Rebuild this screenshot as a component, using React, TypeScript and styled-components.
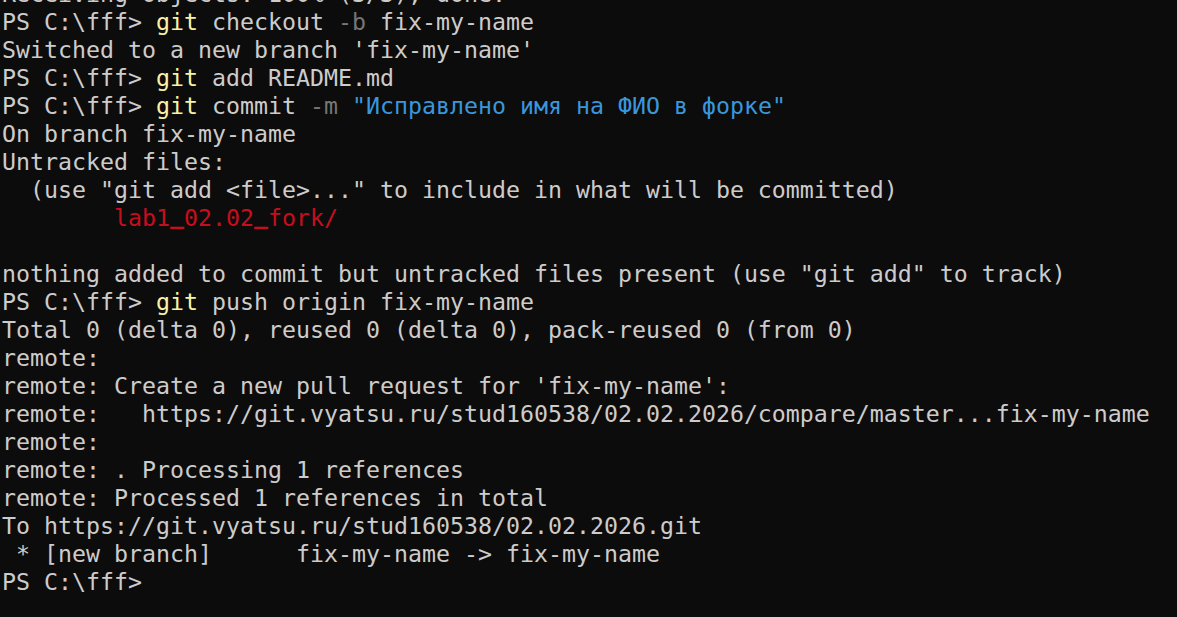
import React from "react";
import styled, { createGlobalStyle } from "styled-components";

const Global = createGlobalStyle`
  html, body {
    margin: 0;
    padding: 0;
    background: #0c0c0c;
    height: 100%;
    overflow: hidden;
  }
`;

const Terminal = styled.div`
  background: #0c0c0c;
  width: 1177px;
  height: 617px;
  overflow: hidden;
  box-sizing: border-box;
  padding-left: 2px;
`;

const Lines = styled.div`
  margin-top: -20px;
  font-family: "DejaVu Sans Mono", "Liberation Mono", monospace;
  font-size: 23.25px;
  line-height: 28px;
  color: #cccccc;
  white-space: pre;
`;

const Line = styled.div`
  height: 28px;
`;

type Tone = "cmd" | "flag" | "str" | "red";

const colors: Record<Tone, string> = {
  cmd: "#f9f1a5",
  flag: "#767676",
  str: "#3a96dd",
  red: "#c50f1f",
};

const Span = styled.span<{ $tone: Tone }>`
  color: ${(p) => colors[p.$tone]};
`;

const Lift = styled.span`
  position: relative;
  top: -2px;
  font-weight: bold;
`;

const P = "PS C:\\fff> ";

export default function App() {
  return (
    <>
      <Global />
      <Terminal>
        <Lines>
          <Line>Receiving objects: 100% (3/3), done.</Line>
          <Line>
            {P}
            <Span $tone="cmd">git</Span> checkout <Span $tone="flag">-b</Span> fix-my-name
          </Line>
          <Line>Switched to a new branch 'fix-my-name'</Line>
          <Line>
            {P}
            <Span $tone="cmd">git</Span> add README.md
          </Line>
          <Line>
            {P}
            <Span $tone="cmd">git</Span> commit <Span $tone="flag">-m</Span>{" "}
            <Span $tone="str">"Исправлено имя на ФИО в форке"</Span>
          </Line>
          <Line>On branch fix-my-name</Line>
          <Line>Untracked files:</Line>
          <Line>{'  (use "git add <file>..." to include in what will be committed)'}</Line>
          <Line>
            {"        "}
            <Span $tone="red">
              lab1<Lift>_</Lift>02.02<Lift>_</Lift>fork/
            </Span>
          </Line>
          <Line> </Line>
          <Line>nothing added to commit but untracked files present (use "git add" to track)</Line>
          <Line>
            {P}
            <Span $tone="cmd">git</Span> push origin fix-my-name
          </Line>
          <Line>Total 0 (delta 0), reused 0 (delta 0), pack-reused 0 (from 0)</Line>
          <Line>remote:</Line>
          <Line>remote: Create a new pull request for 'fix-my-name':</Line>
          <Line>remote:   https://git.vyatsu.ru/stud160538/02.02.2026/compare/master...fix-my-name</Line>
          <Line>remote:</Line>
          <Line>remote: . Processing 1 references</Line>
          <Line>remote: Processed 1 references in total</Line>
          <Line>To https://git.vyatsu.ru/stud160538/02.02.2026.git</Line>
          <Line>{" * [new branch]      fix-my-name -> fix-my-name"}</Line>
          <Line>{P}</Line>
        </Lines>
      </Terminal>
    </>
  );
}
